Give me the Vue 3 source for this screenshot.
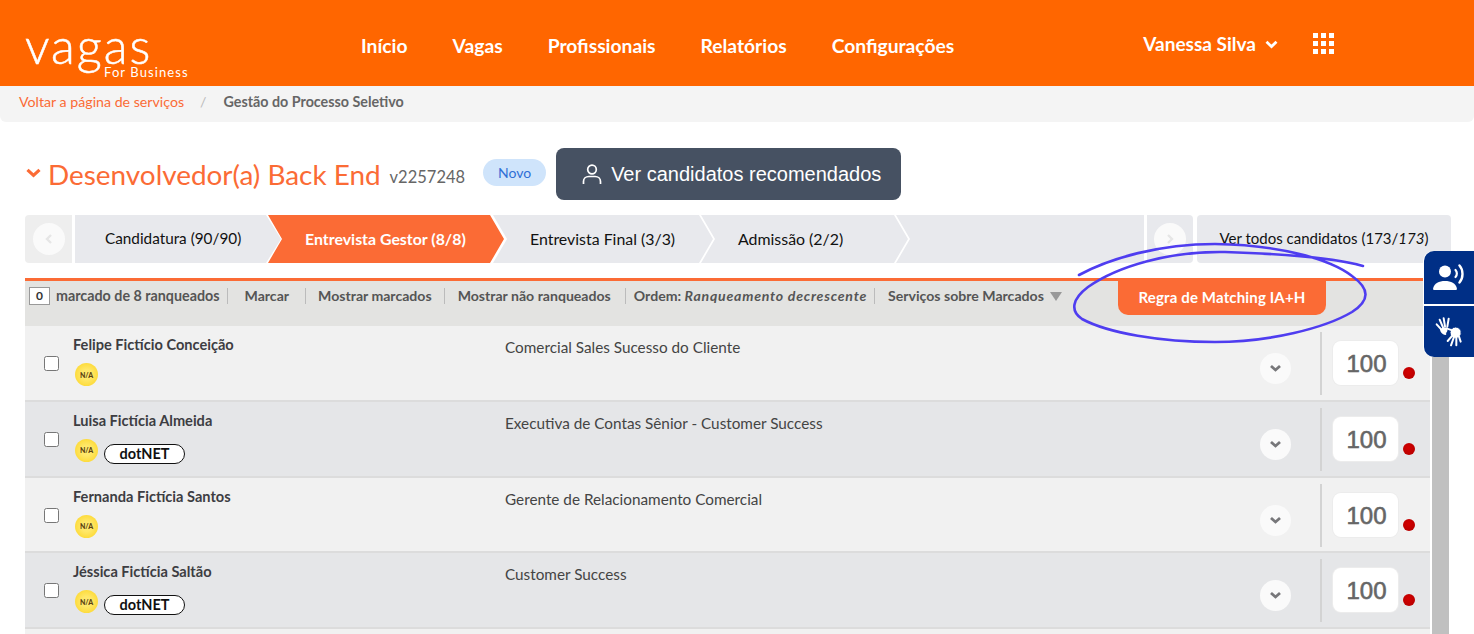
<script setup>
const navItems = ['Início', 'Vagas', 'Profissionais', 'Relatórios', 'Configurações']
const steps = [
  { label: 'Entrevista Gestor (8/8)', cls: 'active', w: 236, m: -13 },
  { label: 'Entrevista Final (3/3)', cls: '', w: 220, m: -11 },
  { label: 'Admissão (2/2)', cls: '', w: 207, m: -12 },
  { label: '', cls: 'last', w: 248, m: -12 },
]
const rows = [
  { name: 'Felipe Fictício Conceição', job: 'Comercial Sales Sucesso do Cliente', tag: false },
  { name: 'Luisa Fictícia Almeida', job: 'Executiva de Contas Sênior - Customer Success', tag: true },
  { name: 'Fernanda Fictícia Santos', job: 'Gerente de Relacionamento Comercial', tag: false },
  { name: 'Jéssica Fictícia Saltão', job: 'Customer Success', tag: true },
]
</script>

<template>
  <div class="page">
    <header class="top">
      <div class="logo">
        <span class="logo-word">vagas</span>
        <span class="logo-sub">For Business</span>
      </div>
      <nav class="nav">
        <a v-for="n in navItems" :key="n">{{ n }}</a>
      </nav>
      <div class="user">
        <span>Vanessa Silva</span>
        <svg width="13" height="9" viewBox="0 0 13 9"><path d="M1.500 1.800 6.500 6.600 11.500 1.800" fill="none" stroke="#fff" stroke-width="2.800"/></svg>
      </div>
      <div class="apps"><i v-for="i in 9" :key="i"></i></div>
    </header>

    <div class="crumbs">
      <a>Voltar a página de serviços</a>
      <span class="sep">/</span>
      <b>Gestão do Processo Seletivo</b>
    </div>

    <main class="main">
      <div class="title-row">
        <svg class="caret" width="15" height="10" viewBox="0 0 15 10"><path d="M1.500 1.800 7.500 7.400 13.500 1.800" fill="none" stroke="#fb6b35" stroke-width="3.200"/></svg>
        <h1>Desenvolvedor(a) Back End</h1>
        <span class="code">v2257248</span>
        <span class="novo">Novo</span>
        <button class="reco">
          <svg width="22" height="22" viewBox="0 0 22 22" fill="none" stroke="#fff" stroke-width="1.700"><circle cx="11" cy="6.500" r="4.300"/><path d="M2.500 21v-2.500c0-3 2.400-5 5.400-5h6.200c3 0 5.400 2 5.400 5V21"/></svg>
          <span>Ver candidatos recomendados</span>
        </button>
      </div>

      <div class="stepper">
        <div class="pager"><span class="round"><svg width="8" height="12" viewBox="0 0 8 12"><path d="M6 2 2 6l4 4" fill="none" stroke="#e6e6e6" stroke-width="2.400"/></svg></span></div>
        <div class="step first">Candidatura (90/90)</div>
        <div v-for="s in steps" :key="s.cls + s.label" class="step" :class="s.cls" :style="{ width: s.w + 'px', marginLeft: s.m + 'px' }">{{ s.label }}</div>
        <div class="pager right"><span class="round"><svg width="8" height="12" viewBox="0 0 8 12"><path d="M2 2l4 4-4 4" fill="none" stroke="#e6e6e6" stroke-width="2.400"/></svg></span></div>
        <div class="all">Ver todos candidatos (173/<em>173</em>)</div>
      </div>

      <div class="toolbar">
        <span class="count">0</span>
        <span class="t t1">marcado de 8 ranqueados</span>
        <span class="t t2">Marcar</span>
        <span class="t t3">Mostrar marcados</span>
        <span class="t t4">Mostrar não ranqueados</span>
        <span class="t t5">Ordem:&nbsp;<em>Ranqueamento decrescente</em></span>
        <span class="t t6">Serviços sobre Marcados <i class="tri"></i></span>
        <button class="rule">Regra de Matching IA+H</button>
      </div>

      <div class="list-wrap">
        <div class="list">
          <div v-for="(r, i) in rows" :key="r.name" class="row" :class="{ alt: i % 2 === 1 }">
            <span class="check"></span>
            <div class="who">
              <div class="name">{{ r.name }}</div>
              <div class="badges">
                <span class="na">N/A</span>
                <span v-if="r.tag" class="tag">dotNET</span>
              </div>
            </div>
            <div class="job">{{ r.job }}</div>
            <span class="more"><svg width="13" height="9" viewBox="0 0 13 9"><path d="M2 2 6.500 6 11 2" fill="none" stroke="#77777a" stroke-width="2.800"/></svg></span>
            <div class="score-cell">
              <span class="score">100</span>
              <span class="dot"></span>
            </div>
          </div>
          <div class="row tail"></div>
        </div>
        <div class="scrollbar"></div>
      </div>
    </main>

    <div class="a11y">
      <div class="a11y-btn">
        <svg width="32" height="27" viewBox="0 0 32 27" fill="#fff"><circle cx="12" cy="7.500" r="6"/><path d="M1 26c-1 0-1-1-.8-2 1-4.500 5.800-7 11.800-7s10.800 2.500 11.800 7c.2 1 .2 2-.8 2z"/><path d="M22.500 6c1.800 1.800 1.800 5.200 0 7" fill="none" stroke="#fff" stroke-width="2.200" stroke-linecap="round"/><path d="M26.500 1.500c4 4.500 4 12.500 0 17" fill="none" stroke="#fff" stroke-width="2.400" stroke-linecap="round"/></svg>
      </div>
      <div class="a11y-btn b2">
        <svg width="30" height="31" viewBox="45 200 90 93" fill="none" stroke="#fff" stroke-linecap="round">
          <g stroke-width="6">
            <path d="M70 244 53 225M72 234 62 211M78 231 74 207M85 232 89 208"/>
            <path d="M66 240c1 7 6 12 13 14"/>
          </g>
          <circle cx="76" cy="243" r="9" fill="#fff" stroke="none"/>
          <circle cx="110" cy="250" r="17" fill="#fff" stroke="#002f86" stroke-width="3"/>
          <g stroke-width="6">
            <path d="M100 259 86 275M105 263 96 288M112 264 112 288M120 262 125 277"/>
          </g>
          <path d="M100 243 82 237" stroke-width="6"/>
        </svg>
      </div>
    </div>

    <svg class="scribble" width="320" height="110" viewBox="1065 240 320 110" fill="none">
      <path d="M1363 266C1335 258 1285 254 1225 252C1170 251 1118 266 1088 287C1072 299 1070 311 1082 319C1108 333 1160 342 1215 342C1270 342 1325 328 1352 312C1370 300 1370 289 1352 276C1330 259 1280 245 1215 244C1160 244 1110 258 1079 275" stroke="#4f3df0" stroke-width="2.600" stroke-linecap="round"/>
    </svg>
  </div>
</template>

<style>
html, body { margin: 0; overflow: hidden; background: #fff; }
</style>

<style scoped>
.page { position: relative; width: 1474px; height: 634px; overflow: hidden; font-family: "Lato", "Noto Sans", sans-serif; color: #333; }
.top { height: 86px; background: #ff6600; display: flex; color: #fff; box-sizing: border-box; padding-left: 25px; }
.logo { position: relative; width: 336px; }
.logo-word { display: block; font-size: 49px; font-weight: 300; line-height: 40px; margin-top: 25px; letter-spacing: 2px; -webkit-text-stroke: .5px #fff; }
.logo-sub { position: absolute; left: 79px; top: 65px; font-size: 13px; letter-spacing: 1.100px; line-height: 15px; }
.nav { display: flex; gap: 45px; padding-top: 35px; font-size: 19.250px; font-weight: 700; line-height: 22px; }
.user { margin-left: 189px; padding-top: 33px; font-size: 19px; font-weight: 700; line-height: 22px; display: flex; gap: 9px; }
.user svg { margin-top: 7px; }
.apps { margin-left: 35px; margin-top: 33px; width: 21px; height: 21px; display: grid; grid-template-columns: repeat(3, 5px); grid-auto-rows: 5px; gap: 3px; }
.apps i { background: #fff; }

.crumbs { height: 36px; background: #f4f4f4; border-radius: 0 0 6px 6px; padding: 0 0 5px 19px; box-sizing: border-box; display: flex; align-items: center; font-size: 14.200px; }
.crumbs a { color: #fb6b35; }
.sep { color: #bbb; margin: 0 17px 0 16px; }
.crumbs b { color: #666; font-weight: 700; font-size: 14.300px; }

.main { padding: 26px 23px 0 25px; }
.title-row { display: flex; align-items: center; height: 52px; }
.caret { margin: 0 7px 2px 1px; }
h1 { margin: 0; font-size: 27.900px; font-weight: 400; color: #fb6b35; line-height: 36px; padding-bottom: 1px; }
.code { font-size: 16.500px; color: #666; margin: 6px 18px 0 9px; }
.novo { width: 63px; height: 27px; border-radius: 14px; background: #cfe4fb; color: #2f6fd6; font-size: 14px; display: flex; align-items: center; justify-content: center; margin: 0 10px 0 0; position: relative; top: -2px; }
.reco { width: 345px; height: 52px; background: #465162; border: 0; border-radius: 8px; color: #fff; font-family: "Liberation Sans", sans-serif; font-size: 20px; display: flex; align-items: center; padding: 0 0 0 25px; gap: 8px; }

.stepper { margin-top: 15px; height: 48px; display: flex; font-size: 15.900px; color: #111; }
.pager { width: 47px; background: #eee; border-radius: 4px 0 0 4px; margin-right: 3px; display: flex; align-items: center; justify-content: center; flex: none; }
.pager.right { width: 46px; background: #e8e9ed; margin: 0 4px 0 3px; border-radius: 0 4px 4px 0; }
.round { width: 32px; height: 32px; border-radius: 50%; background: #fafafa; display: flex; align-items: center; justify-content: center; }
.step { flex: none; background: #e8e9ed; height: 48px; display: flex; align-items: center; box-sizing: border-box; padding: 0 0 2px 37px; white-space: nowrap; clip-path: polygon(0 0, calc(100% - 14px) 0, 100% 50%, calc(100% - 14px) 100%, 0 100%, 14px 50%); }
.step.first { width: 206px; padding-left: 30px; font-size: 15.300px; clip-path: polygon(0 0, calc(100% - 15px) 0, 100% 50%, calc(100% - 15px) 100%, 0 100%); }
.step.active { background: #fb6b35; color: #fff; font-weight: 700; }
.step.last { clip-path: polygon(0 0, 100% 0, 100% 100%, 0 100%, 14px 50%); }
.all { flex: 1; background: #e8e9ed; border-radius: 4px; display: flex; align-items: center; justify-content: center; font-size: 15px; padding-bottom: 2px; box-sizing: border-box; }
.all em { font-style: italic; }

.toolbar { position: relative; margin-top: 15px; border-top: 3px solid #fb6b35; height: 45px; background: #e3e3e1; display: flex; align-items: flex-start; font-size: 14.100px; font-weight: 700; color: #555; padding-left: 4px; box-sizing: content-box; }
.count { width: 19px; height: 16px; border: 1px solid #999; background: #fff; margin-top: 6px; font-size: 12px; line-height: 16px; text-align: center; color: #333; }
.t { margin-top: 7px; line-height: 16px; border-right: 1px solid #bbb; white-space: nowrap; }
.t1 { padding: 0 7px 0 6px; font-size: 14.300px; }
.t2 { padding: 0 16px 0 17px; }
.t3 { padding: 0 12px; }
.t4 { padding: 0 14px 0 13px; }
.t5 { padding: 0 7px 0 8px; }
.t5 em { font-style: italic; letter-spacing: .77px; }
.t6 { border: 0; padding-left: 13px; }
.tri { display: inline-block; width: 0; height: 0; border: 6px solid transparent; border-top: 9px solid #999; border-bottom: 0; margin-left: 3px; }
.rule { position: absolute; left: 1093px; top: -3px; width: 208px; height: 37px; background: #fb6b35; border: 0; border-radius: 0 0 10px 10px; color: #fff; font: 700 15px "Lato", sans-serif; letter-spacing: .15px; padding: 0; }

.list-wrap { display: flex; gap: 2px; }
.list { width: 1405px; flex: none; }
.scrollbar { width: 17px; background: #c0c0c0; height: 310px; }
.row { height: 75.750px; box-sizing: border-box; background: #f1f1f1; border-bottom: 2px solid #dcdcdc; position: relative; display: flex; font-size: 14px; }
.row.alt { background: #e5e6e8; }
.check { width: 13px; height: 13px; border: 1px solid #777; border-radius: 2.500px; background: #fff; margin: 30px 0 0 19px; flex: none; }
.who { width: 432px; margin-left: 14px; flex: none; padding-top: 10px; }
.name { font-weight: 700; font-size: 14.600px; line-height: 17px; color: #3d3d42; white-space: nowrap; }
.badges { display: flex; align-items: flex-start; gap: 6px; margin-top: 10px; padding-left: 2px; }
.na { width: 23px; height: 23px; border-radius: 50%; background: radial-gradient(circle, #ffe86a 30%, #fcd422 95%); font-size: 7px; font-weight: 900; color: #5a4212; display: flex; align-items: center; justify-content: center; }
.tag { width: 79px; height: 18px; margin-top: 5px; border: 1px solid #111; border-radius: 10px; background: #fff; font-size: 14.500px; font-weight: 700; color: #111; text-align: center; line-height: 18px; }
.job { flex: 1; padding-top: 12px; font-size: 15.300px; line-height: 18px; color: #444; }
.more { position: absolute; left: 1235px; top: 27px; width: 31px; height: 31px; border-radius: 50%; background: #fafafa; display: flex; align-items: center; justify-content: center; }
.score-cell { position: absolute; left: 1295px; top: 6px; height: 63px; width: 110px; border-left: 2px solid #d3d3d3; }
.score { position: absolute; left: 11px; top: 9px; width: 65px; height: 44px; border-radius: 8px; background: #fff; box-shadow: 0 0 0 1px #ececec; font: 400 24px/46px "Liberation Sans", sans-serif; -webkit-text-stroke: .6px #666; color: #666; text-align: center; text-indent: 2px; }
.dot { position: absolute; left: 81px; top: 35px; width: 12px; height: 12px; border-radius: 50%; background: radial-gradient(circle at 45% 40%, #d40000, #b00000); }

.a11y { position: absolute; left: 1424px; top: 251px; width: 50px; height: 106px; background: #002f86; border-radius: 10px 0 0 10px; box-shadow: -1px 0 0 #fff; }
.a11y-btn { height: 53px; display: flex; align-items: center; justify-content: center; box-sizing: border-box; }
.a11y-btn.b2 { border-top: 2px solid #fff; }
.scribble { position: absolute; left: 1065px; top: 240px; pointer-events: none; }
</style>
